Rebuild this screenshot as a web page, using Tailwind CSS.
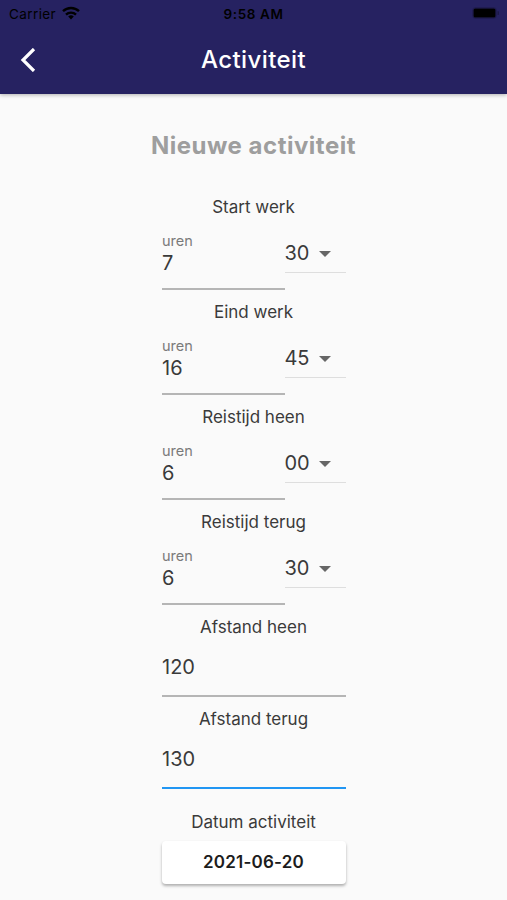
<!DOCTYPE html>
<html lang="nl">

<head>
    <meta charset="utf-8">
    <title>Activiteit</title>
    <script src="https://cdn.jsdelivr.net/npm/@tailwindcss/browser@4"></script>
</head>

<body class="w-[507px] h-[900px] overflow-hidden bg-[#fafafa] font-['Inter',sans-serif] text-[#3a3a3a]">
    <header class="relative h-[94px] bg-[#262261] shadow-[0_1px_4px_rgba(0,0,0,0.3)]">
        <div class="h-7 grid grid-cols-3 items-center px-[9px] text-black">
            <div class="flex items-center">
                <span class="text-[13.5px] leading-7 tracking-[0.4px]">Carrier</span>
                <svg class="ml-[6px] mb-[2px]" width="18" height="14" viewBox="0 0 18 14" fill="none" stroke="currentColor" stroke-width="2.4">
                    <path d="M1 5.2a11.6 11.6 0 0 1 16 0" />
                    <path d="M4 8.6a7.2 7.2 0 0 1 10 0" />
                    <path d="M9 13.4l-2.8-2.9a4 4 0 0 1 5.6 0z" fill="currentColor" stroke="none" />
                </svg>
            </div>
            <span class="text-center text-[13.5px] leading-7 font-semibold tracking-[0.6px]">9:58 AM</span>
            <svg class="justify-self-end -mr-px mt-[-2px]" width="28" height="12" viewBox="0 0 28 12">
                <rect x="1.5" y="0.5" width="24" height="11" rx="3" fill="none" stroke="#000" stroke-opacity="0.15" />
                <rect x="2.5" y="1.5" width="22" height="9" rx="1.5" fill="#000" />
                <path d="M26.500 4v4a2 2 0 0 0 0-4z" fill="#000" fill-opacity="0.25" />
            </svg>
        </div>
        <div class="h-[64px] grid grid-cols-[60px_1fr_60px] items-center text-white">
            <button class="pl-[20px]">
                <svg width="16" height="24" viewBox="0 0 16 24" fill="none" stroke="currentColor" stroke-width="3.2">
                    <path d="M14 1L3 12l11 11" />
                </svg>
            </button>
            <h1 class="text-center text-[24px] leading-8 font-medium tracking-[0.4px]">Activiteit</h1>
        </div>
    </header>

    <main class="w-[184px] mx-auto flex flex-col">
        <h2 class="-mx-10 mt-[36px] mb-[32px] h-8 text-center text-[24px] leading-8 font-bold tracking-[0.5px] text-[#9e9e9e]">Nieuwe activiteit</h2>

        <section class="h-[105px]">
            <h3 class="text-center text-[17px] leading-[26px]">Start werk</h3>
            <div class="flex items-start">
                <div class="w-[123px] h-[70px] pt-[12px] border-b-2 border-[#b5b5b5]">
                    <p class="text-[14.5px] leading-[18px] text-[#7a7a7a] pl-[0.5px]">uren</p>
                    <p class="text-[20px] leading-[26px] pl-[0.5px]">7</p>
                </div>
                <div class="w-[61px] h-[53px] pt-[20px] flex items-start border-b border-[#dedede]">
                    <span class="w-[25px] text-[20px] leading-[26px] tracking-[-0.2px]">30</span>
                    <svg class="ml-[9px] mt-[11px]" width="12" height="6" viewBox="0 0 12 6"><path d="M0 0h12L6 6z" fill="#666" /></svg>
                </div>
            </div>
        </section>

        <section class="h-[105px]">
            <h3 class="text-center text-[17px] leading-[26px]">Eind werk</h3>
            <div class="flex items-start">
                <div class="w-[123px] h-[70px] pt-[12px] border-b-2 border-[#b5b5b5]">
                    <p class="text-[14.5px] leading-[18px] text-[#7a7a7a] pl-[0.5px]">uren</p>
                    <p class="text-[20px] leading-[26px] pl-[0.5px]">16</p>
                </div>
                <div class="w-[61px] h-[53px] pt-[20px] flex items-start border-b border-[#dedede]">
                    <span class="w-[25px] text-[20px] leading-[26px] tracking-[-0.2px]">45</span>
                    <svg class="ml-[9px] mt-[11px]" width="12" height="6" viewBox="0 0 12 6"><path d="M0 0h12L6 6z" fill="#666" /></svg>
                </div>
            </div>
        </section>

        <section class="h-[105px]">
            <h3 class="text-center text-[17px] leading-[26px]">Reistijd heen</h3>
            <div class="flex items-start">
                <div class="w-[123px] h-[70px] pt-[12px] border-b-2 border-[#b5b5b5]">
                    <p class="text-[14.5px] leading-[18px] text-[#7a7a7a] pl-[0.5px]">uren</p>
                    <p class="text-[20px] leading-[26px] pl-[0.5px]">6</p>
                </div>
                <div class="w-[61px] h-[53px] pt-[20px] flex items-start border-b border-[#dedede]">
                    <span class="w-[25px] text-[20px] leading-[26px] tracking-[-0.2px]">00</span>
                    <svg class="ml-[9px] mt-[11px]" width="12" height="6" viewBox="0 0 12 6"><path d="M0 0h12L6 6z" fill="#666" /></svg>
                </div>
            </div>
        </section>

        <section class="h-[105px]">
            <h3 class="text-center text-[17px] leading-[26px]">Reistijd terug</h3>
            <div class="flex items-start">
                <div class="w-[123px] h-[70px] pt-[12px] border-b-2 border-[#b5b5b5]">
                    <p class="text-[14.5px] leading-[18px] text-[#7a7a7a] pl-[0.5px]">uren</p>
                    <p class="text-[20px] leading-[26px] pl-[0.5px]">6</p>
                </div>
                <div class="w-[61px] h-[53px] pt-[20px] flex items-start border-b border-[#dedede]">
                    <span class="w-[25px] text-[20px] leading-[26px] tracking-[-0.2px]">30</span>
                    <svg class="ml-[9px] mt-[11px]" width="12" height="6" viewBox="0 0 12 6"><path d="M0 0h12L6 6z" fill="#666" /></svg>
                </div>
            </div>
        </section>

        <section class="h-[92px]">
            <h3 class="text-center text-[17px] leading-[26px]">Afstand heen</h3>
            <p class="h-[57px] pt-[14px] pl-[0.5px] border-b-2 border-[#b5b5b5] text-[20px] leading-[26px]">120</p>
        </section>

        <section class="h-[103px]">
            <h3 class="text-center text-[17px] leading-[26px]">Afstand terug</h3>
            <p class="h-[57px] pt-[14px] pl-[0.5px] border-b-2 border-[#2196f3] text-[20px] leading-[26px]">130</p>
        </section>

        <section>
            <h3 class="text-center text-[17px] leading-[26px]">Datum activiteit</h3>
            <button class="mt-[6px] w-full h-[43px] pt-px rounded bg-white shadow-[0_2px_3px_rgba(0,0,0,0.3)] text-[17px] font-semibold tracking-[0.2px] text-[#1c1c1c]">2021-06-20</button>
        </section>
    </main>
</body>

</html>
